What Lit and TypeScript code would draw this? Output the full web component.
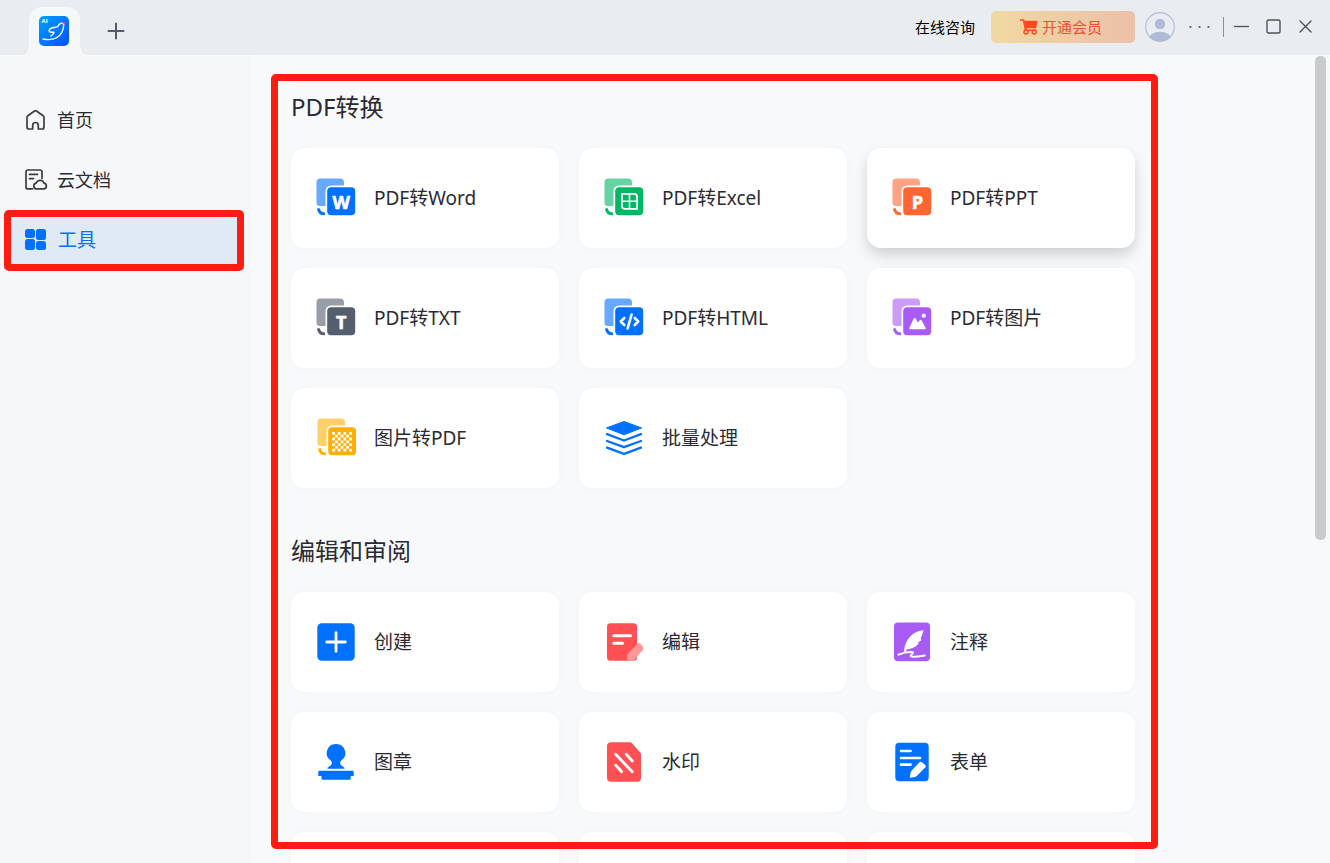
import { LitElement, html, svg, css, nothing } from "lit";
import { customElement, property, state } from "lit/decorators.js";
import { classMap } from "lit/directives/class-map.js";

const stacked = (color: string, glyph: unknown, dx = 0) => svg`
  <g fill=${color}>
    <path opacity="0.6" d="M${4 + dx} .5H${24 + dx}a4 4 0 0 1 4 4V7.500H${15 + dx}a5.500 5.500 0 0 0 -5.500 5.500V28H${4 + dx}a3.500 3.500 0 0 1 -3.500 -3.500V4a3.500 3.500 0 0 1 3.500 -3.500z"/>
    <path d="M${2.4 + dx} 30.300c.2 3.200 2.400 5.400 6.600 5.600" fill="none" stroke=${color} stroke-width="2.900"/>
    <rect x=${11.2 + dx} y="9.300" width="28" height="28" rx="4"/>
  </g>
  ${glyph}`;

const letter = (char: string) => svg`
  <text class="letter" x="25.300" y="30.500" text-anchor="middle" fill="#fff" stroke="#fff" stroke-width=".6">${char}</text>`;

const checker = () => {
  const cells = [];
  for (let r = 0; r < 7; r++)
    for (let c = 0; c < 7; c++)
      if ((r + c) % 2 === 0)
        cells.push(svg`<rect x=${16.2 + c * 2.8} y=${14 + r * 2.8} width="2.8" height="2.8" rx=".5"/>`);
  return svg`<g fill="#fff">${cells}</g>`;
};

const icons: Record<string, unknown> = {
  word: stacked("#0070ff", letter("W")),
  excel: stacked("#00b864", svg`
    <path fill="#fff" fill-rule="evenodd" d="M18 15H30a4 4 0 0 1 4 4V31.700H21a4 4 0 0 1 -4 -4V16a1 1 0 0 1 1 -1zM18.800 16.800V22.500H24.700V16.800zM26.300 16.800V22.500H32.200V19.300a2.500 2.500 0 0 0 -2.500 -2.500zM18.800 24.100V27.400a2.500 2.500 0 0 0 2.500 2.500H24.700V24.100zM26.300 24.100V29.900H32.200V24.100z"/>`),
  ppt: stacked("#ff6633", letter("P")),
  txt: stacked("#545e6e", letter("T")),
  html: stacked("#0070ff", svg`
    <g fill="none" stroke="#fff" stroke-width="2.600" stroke-linecap="round" stroke-linejoin="round">
      <path d="M20.300 20l-3.500 3.500 3.500 3.500M30.700 20l3.500 3.500-3.500 3.500M27.600 16.500l-4 14"/>
    </g>`),
  image: stacked("#a95cf5", svg`
    <path fill="#fff" d="M17.300 30l4.300-9.200q1.100-1.500 2.200 0l2 3.700 1.700-2.100q1.200-1.200 2.200.2l4 7.400q.3 1.200-1 1.300H18.200q-1.200-.1-.9-1.300z"/>
    <circle cx="31.700" cy="17.700" r="2.100" fill="#fff"/>`),
  toPdf: stacked("#ffaf05", checker(), 1),
  batch: svg`
    <path fill="#0070ff" stroke="#0070ff" stroke-linejoin="round" d="M20 3.500L37.500 9.900 20 16.800 2.500 9.900z"/>
    <path fill="none" stroke="#0070ff" stroke-width="2.300" stroke-linecap="round" stroke-linejoin="round"
      d="M3 16.200l17 6.300 17-6.300M3 23l17 6.200L37 23M3 29.700l17 6.200 17-6.200"/>`,
  create: svg`
    <rect x="1.300" y="1.300" width="37.400" height="37.400" rx="4.500" fill="#0070ff"/>
    <path d="M20 10.700v18.600M10.700 20h18.600" stroke="#fff" stroke-width="2.800" stroke-linecap="round"/>`,
  edit: svg`
    <rect x="3" y="1.300" width="30" height="37.400" rx="3.500" fill="#ff5053"/>
    <path d="M9.800 13.700h16.700M9.800 21.300h8.700" stroke="#fff" stroke-width="3" stroke-linecap="round"/>
    <path fill="#ff9799" d="M23 38.700v-6.200l10.500-10.800q1.500-1.300 3 0l2.500 3q1 1.600 0 3L30 38.200l-1.200.5z"/>`,
  note: svg`
    <rect x="2" y=".5" width="36" height="38.800" rx="4" fill="#a95cf5"/>
    <path fill="#fff" d="M31.700 8.300C22 8.500 12.500 17 12.200 30h1.700l1-2.700c6-.6 9.500-2.700 12-6.300l-1.200-.4 3-1.900c1-1.700 0-1.700.2-3.500 2-2 1.500-4.500 2.800-6.900z"/>
    <path fill="none" stroke="#fff" stroke-width="2" stroke-linecap="round" stroke-linejoin="round" d="M6.500 32.600c4.500-1.800 9.500-2.800 14.200-2.400 1.300.3-2.600 2.700-2 3.900 1.500 1.700 8.500.3 14-.6"/>`,
  stamp: svg`
    <path fill="#0070ff" d="M20 2a9 9 0 0 1 5.500 16.300c-1.700 1.500-1.500 3.500-.7 4.700l3.700 2.700v1.100h-17v-1.100l3.700-2.700c.8-1.200 1-3.200-.7-4.700A9 9 0 0 1 20 2zM3.300 28.800h33.400q1 0 1 1V34h-3v2.800q0 1-1 1H6.500q-1 0-1-1V34H2.300v-4.200q0-1 1-1z"/>`,
  watermark: svg`
    <path fill="#ff5053" d="M7 .2h19q1.200 0 2 1L36.200 10.500q.8.800.8 2V36a3.800 3.800 0 0 1 -4 3.800H7A3.800 3.800 0 0 1 3 36V4A3.800 3.800 0 0 1 7 .2z"/>
    <path d="M11.700 12.300L28.200 29.800M22.200 12.300l6 6.700M11.700 23.300l6 6.500" stroke="#fff" stroke-width="2.800" stroke-linecap="round"/>`,
  form: svg`
    <rect x="3.300" y=".7" width="33.400" height="38.600" rx="4" fill="#0070ff"/>
    <path d="M9 9h9.500M9 16h19M9 22.700h9.500" stroke="#fff" stroke-width="2.700" stroke-linecap="round"/>
    <path fill="#fff" d="M17.700 35.700l1-5.500q.3-.9 1-1.700l7.800-8.200q1.200-1 2.400 0l3.500 3q.8.900 0 2L24.800 34q-.8.700-1.700.9z"/>`,
};

@customElement("tool-card")
class ToolCard extends LitElement {
  @property() label = "";
  @property() icon = "";
  @property({ type: Boolean }) raised = false;

  static styles = css`
    :host { display: block; }
    .card {
      width: 100%;
      height: 100px;
      display: flex;
      align-items: center;
      gap: 18px;
      padding: 0 25px;
      border: 0;
      border-radius: 14px;
      background: #fff;
      box-shadow: 0 0 12px rgba(0, 0, 0, 0.025);
      color: #2a2a33;
      font: inherit;
      font-size: 19px;
      line-height: 28px;
      text-align: left;
      white-space: nowrap;
    }
    .raised { box-shadow: 0 7px 14px rgba(0, 0, 0, 0.16); }
    .icon { width: 40px; height: 40px; flex: none; }
    .letter { font: bold 18px "Open Sans", sans-serif; }
  `;

  render() {
    return html`<button type="button" class=${classMap({ card: true, raised: this.raised })}>
      ${this.icon ? html`<svg class="icon" viewBox="0 0 40 40" aria-hidden="true">${icons[this.icon]}</svg>` : nothing}
      ${this.label ? html`<span>${this.label}</span>` : nothing}
    </button>`;
  }
}

interface Tool { label: string; icon: string; }

const sections: { title: string; tools: Tool[]; spare: number }[] = [
  {
    title: "PDF转换",
    spare: 0,
    tools: [
      { label: "PDF转Word", icon: "word" },
      { label: "PDF转Excel", icon: "excel" },
      { label: "PDF转PPT", icon: "ppt" },
      { label: "PDF转TXT", icon: "txt" },
      { label: "PDF转HTML", icon: "html" },
      { label: "PDF转图片", icon: "image" },
      { label: "图片转PDF", icon: "toPdf" },
      { label: "批量处理", icon: "batch" },
    ],
  },
  {
    title: "编辑和审阅",
    spare: 3,
    tools: [
      { label: "创建", icon: "create" },
      { label: "编辑", icon: "edit" },
      { label: "注释", icon: "note" },
      { label: "图章", icon: "stamp" },
      { label: "水印", icon: "watermark" },
      { label: "表单", icon: "form" },
    ],
  },
];

const navItems = [
  {
    label: "首页",
    icon: svg`<path fill="none" stroke="#3c3c42" stroke-width="1.700" stroke-linejoin="round"
      d="M8.700 21H5a2 2 0 0 1 -2 -2V9.500q0-1.200.9-1.800L10.500 3q1-.6 2 0l6.600 4.700q.9.600.9 1.800v9.500a2 2 0 0 1 -2 2h-3.700v-3.700a2.800 2.800 0 0 0 -5.600 0z"/>`,
  },
  {
    label: "云文档",
    icon: svg`<g fill="none" stroke="#3c3c42" stroke-width="1.700" stroke-linejoin="round" stroke-linecap="round">
      <path d="M8.500 20.900H4a2 2 0 0 1 -2 -2V4a2 2 0 0 1 2 -2h12a2 2 0 0 1 2 2v6.500M5.500 6.400h8M5.500 10.700h4"/>
      <path d="M12.300 20.900a2.900 2.900 0 0 1 -.2-5.700 4.200 4.200 0 0 1 8 0 2.900 2.900 0 0 1 -.2 5.700z"/></g>`,
  },
  {
    label: "工具",
    icon: svg`<g fill="#0070ff">
      <rect x="1" y="1" width="10" height="9" rx="2.500"/><rect x="12" y="1" width="10" height="11" rx="2.500"/>
      <rect x="1" y="11" width="10" height="11" rx="2.500"/><rect x="12" y="13" width="10" height="9" rx="2.500"/></g>`,
  },
];

@customElement("app-root")
class AppRoot extends LitElement {
  @state() private active = "工具";

  static styles = css`
    :host {
      display: flex;
      flex-direction: column;
      height: 100vh;
      overflow: hidden;
      background: #f8f9fb;
      color: #2a2a33;
      font-family: "Noto Sans", "Noto Sans CJK SC", sans-serif;
    }
    *, *::before, *::after { box-sizing: border-box; }
    button { font: inherit; color: inherit; border: 0; background: none; padding: 0; }
    svg { display: block; flex: none; }

    .titlebar {
      flex: none;
      height: 55px;
      display: flex;
      justify-content: space-between;
      background: #e9edf0;
      padding: 0 16px 0 29px;
    }
    .tabs { display: flex; align-items: flex-end; gap: 26px; }
    .tab {
      position: relative;
      width: 51px;
      height: 48px;
      padding: 0 1px 1px 0;
      display: grid;
      place-items: center;
      background: #f5f7f9;
      border-radius: 13px 13px 0 0;
    }
    .tab::before, .tab::after {
      content: "";
      position: absolute;
      bottom: 0;
      width: 6px;
      height: 11px;
      background: radial-gradient(ellipse 6px 11px at 0 0, transparent 98%, #f5f7f9);
    }
    .tab::before { left: -6px; }
    .tab::after { right: -6px; background: radial-gradient(ellipse 6px 11px at 100% 0, transparent 98%, #f5f7f9); }
    .add { height: 48px; }
    .logo-text { font: bold 6px "Open Sans", sans-serif; }

    .actions { display: flex; align-items: center; height: 54px; }
    .consult { color: #000; text-decoration: none; font-size: 15px; line-height: 22px; }
    .vip {
      width: 144px;
      height: 32px;
      margin: 0 10px 0 16px;
      padding-right: 4px;
      display: flex;
      align-items: center;
      justify-content: center;
      gap: 4px;
      border-radius: 5px;
      background: linear-gradient(90deg, #f0d9a2, #edc0a9);
      color: #f0502d;
      font-size: 15px;
      line-height: 22px;
    }
    .more { margin: 0 13px 0 14px; }
    .divider { width: 1px; height: 20px; background: #8d9095; }
    .windows { display: flex; gap: 16px; margin-left: 10px; }

    .body { flex: 1; min-height: 0; display: flex; }
    .sidebar { flex: none; width: 250px; background: #f5f7f9; padding-top: 35px; }
    .nav { list-style: none; margin: 0; padding: 0; }
    .nav-row { position: relative; padding: 0 6px 0 4px; }
    .nav-item {
      width: 100%;
      height: 60px;
      display: flex;
      align-items: center;
      gap: 9px;
      padding-left: 20px;
      font-size: 18px;
      line-height: 26px;
    }
    .nav-item.active { background: #e0eaf7; color: #0070ff; font-size: 19px; gap: 10px; }
    .marker {
      position: absolute;
      border: 7px solid #ff1d12;
      border-radius: 5px;
      pointer-events: none;
    }
    .nav-marker { inset: 0 6px -1px 4px; }
    .main { position: relative; flex: 1; min-width: 0; overflow: hidden; padding: 36px 180px 0 41px; }
    .main-marker { inset: 19px 157px 14px 21px; }
    .section { margin-bottom: 47px; }
    .title { margin: 0 0 25px; font-size: 24px; line-height: 32px; font-weight: 400; }
    .grid { display: grid; grid-template-columns: repeat(3, minmax(0, 1fr)); gap: 20px; }
    .track { flex: none; width: 15px; padding: 1px 4px 0 0; }
    .thumb { height: 60%; border-radius: 5px; background: #c9cacc; }
  `;

  render() {
    return html`
      <header class="titlebar">
        <div class="tabs">
          <button class="tab" type="button" aria-label="主页">
            <svg width="30" height="30" viewBox="0 0 30 30">
              <defs><linearGradient id="lg" x1="0" y1="0" x2="1" y2="1">
                <stop offset="0" stop-color="#00a2ff"/><stop offset="1" stop-color="#0050ff"/></linearGradient></defs>
              <rect width="30" height="30" rx="5" fill="url(#lg)"/>
              <text class="logo-text" x="2.500" y="6.500" fill="#fff">AI</text>
              <path fill="none" stroke="#fff" stroke-width="1.400" stroke-linecap="round" stroke-linejoin="round"
                d="M4 23c9 2 20-.5 20.800-14.500-.5-2-4-1.500-5.200.7-1 2.300-2.300 2.300-4.600 2.300-3.500.3-6 2.500-4.500 4.200 1.200.8 3 .3 4.500.6 0 1.500-1.500 2.700-3 3.700"/>
              <path d="M23.500 6.500l3-.5-1.200 3z" fill="#f0406a"/>
            </svg>
          </button>
          <button class="add" type="button" aria-label="新建">
            <svg width="20" height="20" viewBox="0 0 20 20"><path d="M10 2.500v15M2.500 10h15" stroke="#575b66" stroke-width="2" stroke-linecap="round"/></svg>
          </button>
        </div>
        <div class="actions">
          <a class="consult" href="#">在线咨询</a>
          <button class="vip" type="button">
            <svg width="18" height="16" viewBox="0 0 18 16" fill="#ff4b1f">
              <path d="M0 .2h3.500q.6 0 .8.600l.3 1H17q.8 0 .6.900l-1.400 5.800q-.2.700-.9.700H6.600l.2 1.300H15.500V12H5.600q-.7 0-.8-.7L2.800 1.800H0z"/>
              <circle cx="6" cy="13" r="2" fill="none" stroke="#ff4b1f" stroke-width="1.500"/>
              <circle cx="14.200" cy="13" r="2" fill="none" stroke="#ff4b1f" stroke-width="1.500"/>
            </svg>
            <span>开通会员</span>
          </button>
          <button type="button" aria-label="账户">
            <svg width="30" height="30" viewBox="0 0 30 30">
              <defs><clipPath id="av"><circle cx="15" cy="15" r="14.500"/></clipPath></defs>
              <circle cx="15" cy="15" r="14.300" fill="#e9edf2" stroke="#b0bcd6" stroke-width="1.200"/>
              <circle cx="15" cy="12" r="5.200" fill="#b0bcd6"/>
              <ellipse cx="15" cy="27.500" rx="11.500" ry="7.700" fill="#b0bcd6" clip-path="url(#av)"/>
            </svg>
          </button>
          <button class="more" type="button" aria-label="更多">
            <svg width="21" height="16" viewBox="0 0 21 16" fill="#6a6e78"><rect x=".5" y="7" width="2" height="2"/><rect x="9.500" y="7" width="2" height="2"/><rect x="18.500" y="7" width="2" height="2"/></svg>
          </button>
          <span class="divider"></span>
          <div class="windows">
            <button type="button" aria-label="最小化"><svg width="16" height="16" viewBox="0 0 16 16"><path d="M0 7.500h15" stroke="#4e525e" stroke-width="1.300"/></svg></button>
            <button type="button" aria-label="最大化"><svg width="16" height="16" viewBox="0 0 16 16"><rect x="1" y="1" width="13" height="13" rx="1.500" fill="none" stroke="#4e525e" stroke-width="1.400"/></svg></button>
            <button type="button" aria-label="关闭"><svg width="16" height="16" viewBox="0 0 16 16"><path d="M2 2l11 11M13 2L2 13" stroke="#4e525e" stroke-width="1.400" stroke-linecap="round"/></svg></button>
          </div>
        </div>
      </header>
      <div class="body">
        <nav class="sidebar">
          <ul class="nav">
            ${navItems.map((item) => html`
              <li class="nav-row">
                <button type="button" class=${classMap({ "nav-item": true, active: item.label === this.active })}
                  @click=${() => (this.active = item.label)}>
                  <svg width="24" height="24" viewBox="0 0 24 24" aria-hidden="true">${item.icon}</svg>
                  <span>${item.label}</span>
                </button>
                ${item.label === "工具" ? html`<div class="marker nav-marker"></div>` : nothing}
              </li>`)}
          </ul>
        </nav>
        <main class="main">
          ${sections.map((section) => html`
            <section class="section">
              <h2 class="title">${section.title}</h2>
              <div class="grid">
                ${section.tools.map((tool) => html`
                  <tool-card .label=${tool.label} .icon=${tool.icon} ?raised=${tool.icon === "ppt"}></tool-card>`)}
                ${Array.from({ length: section.spare }, () => html`<tool-card aria-hidden="true"></tool-card>`)}
              </div>
            </section>`)}
          <div class="marker main-marker"></div>
        </main>
        <div class="track"><div class="thumb"></div></div>
      </div>`;
  }
}
